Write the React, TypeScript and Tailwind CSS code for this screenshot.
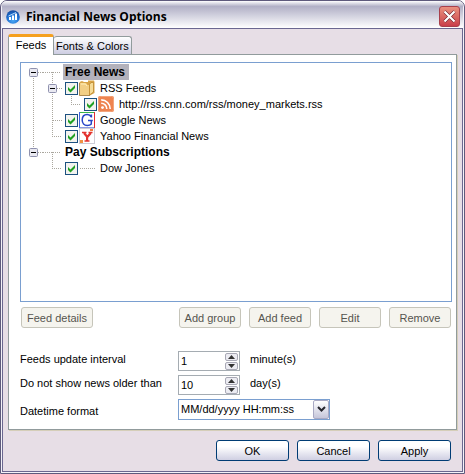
import { useState } from "react";
import type { ReactNode } from "react";

type Guide = "blank" | "bar" | "tee" | "elbow" | "branch" | "first" | "middle" | "last";

const guidePaths: Record<Guide, string> = {
  blank: "",
  bar: "M9.5 0V16",
  tee: "M9.5 0V16M10 8.5H19",
  elbow: "M9.5 0V8M9 8.5H19",
  branch: "M0 8.5H17M9.5 8V16",
  first: "M9.5 8V16M10 8.5H19",
  middle: "M9.5 0V16M10 8.5H19",
  last: "M9.5 0V8M10 8.5H19",
};

const hasToggle = (guide: Guide) => guide === "first" || guide === "middle" || guide === "last";

function GuideCell({ guide }: { guide: Guide }) {
  return (
    <svg className="h-4 w-[19px] shrink-0" viewBox="0 0 19 16" aria-hidden="true">
      <path d={guidePaths[guide]} fill="none" stroke="#aaa79e" strokeDasharray="1 1" />
      {hasToggle(guide) && (
        <>
          <rect x="5.5" y="4.5" width="8" height="8" rx="1" fill="#e9e9f1" stroke="#8f91ae" />
          <path d="M7 8.5H12" stroke="#000" />
        </>
      )}
    </svg>
  );
}

function FolderIcon() {
  return (
    <svg className="size-4" viewBox="0 0 16 16" aria-hidden="true">
      <path d="M0.5 2L3 1L5 2H9V0.5H15L15.5 2V13L11 15.5H0.5Z" fill="#d9a548" />
      <path d="M1 3H7L8.5 5H10V15H1Z" fill="#f2cf85" />
      <path d="M2 4H6.5L8 6" fill="none" stroke="#fff0b9" />
      <path d="M10.5 4.5L12 2.5H14.5V12L10.5 15Z" fill="#f6dc98" stroke="#b98225" strokeWidth=".7" />
      <path d="M0.5 3V15.5H11" fill="none" stroke="#9d783c" strokeWidth=".8" />
    </svg>
  );
}

function FeedIcon() {
  return (
    <svg className="size-4" viewBox="0 0 16 16" aria-hidden="true">
      <rect width="16" height="16" rx="2" fill="#ee8450" />
      <rect x=".5" y=".5" width="15" height="15" rx="2" fill="none" stroke="#f3a57d" />
      <circle cx="4.5" cy="11.6" r="1.4" fill="#fff" />
      <path d="M3.2 7.3a5.6 5.6 0 0 1 5.6 5.6M3.2 3.9a9 9 0 0 1 9 9" fill="none" stroke="#fff" strokeWidth="1.6" />
    </svg>
  );
}

function GoogleIcon() {
  return (
    <svg className="size-4" viewBox="0 0 16 16" aria-hidden="true">
      <rect width="16" height="16" fill="#fff" />
      <path d="M0 .5H15" stroke="#39b54a" />
      <path d="M15.5 0V16" stroke="#e52c35" />
      <path d="M.5 0V16" stroke="#4262dc" />
      <path d="M1 15.5H15" stroke="#8b9be0" />
      <path d="M12.4 5.5V2.5M12.2 4.8C11.4 3.2 10 2.4 8.2 2.4C5 2.4 3.2 4.8 3.2 8C3.2 11.2 5.2 13.5 8.2 13.5C10 13.5 11.5 13 12.3 12V8.6M9 8.5H13.8" fill="none" stroke="#2746c8" strokeWidth="1.5" />
    </svg>
  );
}

function YahooIcon() {
  return (
    <svg className="size-4" viewBox="0 0 16 16" aria-hidden="true">
      <rect x=".5" y=".5" width="15" height="15" fill="#fff" stroke="#cdcdd6" />
      <path d="M3 4.5H7.5M9.5 4.5H13.5M5.5 13H10.5" stroke="#e33431" strokeWidth="1.4" />
      <path d="M5 5L8.3 9L11.8 5M8.1 8.5V13" fill="none" stroke="#e33431" strokeWidth="2.2" />
      <rect x="11" y="1" width="3" height="2" fill="#ef7b43" />
      <rect x="1" y="12" width="3" height="3" fill="#f09344" />
    </svg>
  );
}

function DottedGap() {
  return (
    <svg className="size-4" viewBox="0 0 16 16" aria-hidden="true">
      <path d="M1 8.5H16" stroke="#aaa79e" strokeDasharray="1 1" />
    </svg>
  );
}

function AppIcon() {
  return (
    <svg className="size-[14px] shrink-0" viewBox="0 0 14 14" aria-hidden="true">
      <defs>
        <radialGradient id="globe" cx=".5" cy=".75" r=".75">
          <stop offset="0" stopColor="#4aa8f5" />
          <stop offset=".6" stopColor="#1f6fd0" />
          <stop offset="1" stopColor="#164a9c" />
        </radialGradient>
      </defs>
      <circle cx="7" cy="7" r="6.8" fill="url(#globe)" />
      <path d="M3 7H5V10H3ZM6 5.5H8V10H6ZM9 3.5H11V10H9Z" fill="#fff" />
      <path d="M2.5 6L10 2.5" stroke="#b8dcfa" />
    </svg>
  );
}

type TreeRow = {
  label: string;
  guides: Guide[];
  group?: boolean;
  icon?: ReactNode;
};

const rows: TreeRow[] = [
  { label: "Free News", guides: ["first", "branch"], group: true },
  { label: "RSS Feeds", guides: ["bar", "middle"], icon: <FolderIcon /> },
  { label: "http://rss.cnn.com/rss/money_markets.rss", guides: ["bar", "bar", "elbow"], icon: <FeedIcon /> },
  { label: "Google News", guides: ["bar", "tee"], icon: <GoogleIcon /> },
  { label: "Yahoo Financial News", guides: ["bar", "elbow"], icon: <YahooIcon /> },
  { label: "Pay Subscriptions", guides: ["last", "branch"], group: true },
  { label: "Dow Jones", guides: ["blank", "elbow"], icon: <DottedGap /> },
];

function FeedRow({ row, selected, onSelect }: { row: TreeRow; selected: boolean; onSelect: () => void }) {
  return (
    <li className="flex h-4 items-center" onClick={onSelect}>
      {row.guides.map((guide, i) => (
        <GuideCell key={i} guide={guide} />
      ))}
      {row.group ? (
        <span className={`ml-px h-4 pr-1 pl-0.5 text-[12px] leading-4 font-bold ${selected ? "bg-[#b3b2bc]" : ""}`}>
          {row.label}
        </span>
      ) : (
        <label className="flex items-center pl-[3px]">
          <span className="relative mr-px size-[13px]">
            <input
              type="checkbox"
              defaultChecked
              className="peer block size-[13px] appearance-none border border-[#1c5180] bg-[#f3f3ef]"
            />
            <svg className="pointer-events-none absolute inset-0 hidden peer-checked:block" viewBox="0 0 13 13" aria-hidden="true">
              <path d="M3 5V8L5.5 10.5L10 6V3L5.5 7.5Z" fill="#21a121" />
            </svg>
          </span>
          {row.icon}
          <span className="ml-[5px] leading-4 whitespace-nowrap">{row.label}</span>
        </label>
      )}
    </li>
  );
}

function SpinnerRow({ id, label, unit, initial }: { id: string; label: string; unit: string; initial: number }) {
  const [value, setValue] = useState(initial);
  const arrow = "flex h-2 w-[13px] items-center justify-center rounded-xs border border-[#a9a9b6] bg-[#ececf2]";
  return (
    <div className="flex h-6 items-center">
      <label htmlFor={id} className="w-[158px] pb-1">
        {label}
      </label>
      <div className="flex h-5 w-[62px] items-center border border-[#a5acb2] bg-white pr-px">
        <input
          id={id}
          type="text"
          value={value}
          onChange={(e) => setValue(Number(e.target.value) || 0)}
          className="w-full min-w-0 px-0.5 outline-none"
        />
        <div className="flex flex-col gap-px">
          <button type="button" aria-label="Increase" className={arrow} onClick={() => setValue(value + 1)}>
            <svg className="h-1 w-[7px]" viewBox="0 0 7 4" aria-hidden="true">
              <path d="M0 4L3.5 0L7 4Z" fill="#333" />
            </svg>
          </button>
          <button type="button" aria-label="Decrease" className={arrow} onClick={() => setValue(value - 1)}>
            <svg className="h-1 w-[7px]" viewBox="0 0 7 4" aria-hidden="true">
              <path d="M0 0L3.5 4L7 0Z" fill="#333" />
            </svg>
          </button>
        </div>
      </div>
      <span className="pb-1 pl-[10px]">{unit}</span>
    </div>
  );
}

function ListButton({ children, wide }: { children: ReactNode; wide?: boolean }) {
  return (
    <button
      type="button"
      disabled
      className={`h-[21px] rounded-[3px] border border-[#c6c5ba] bg-[#f5f4ee] text-[#55554f] ${wide ? "w-[72px]" : "w-[62px]"}`}
    >
      {children}
    </button>
  );
}

function DialogButton({ children }: { children: ReactNode }) {
  return (
    <button
      type="button"
      className="h-[21px] w-[73px] rounded-[3px] border border-[#003c74] bg-linear-to-b from-white from-30% to-[#cfcfe2]"
    >
      {children}
    </button>
  );
}

export default function App() {
  const [selected, setSelected] = useState("Free News");

  return (
    <div className="flex min-h-screen flex-col overflow-hidden rounded-t-[7px] border border-[#5e5a7c] bg-[#f4f2f8] px-px pb-px font-['Liberation_Sans',Arial,sans-serif] text-[11px] leading-4 text-black">
      <header className="flex h-[27px] shrink-0 items-center justify-between bg-linear-to-b from-white via-[#b1b0c6] via-20% to-white pr-[3px] pl-1">
        <div className="flex items-center gap-[6px] pt-1">
          <AppIcon />
          <h1 className="font-['Open_Sans','Trebuchet_MS',sans-serif] text-[12px] leading-4 font-bold">
            Financial News Options
          </h1>
        </div>
        <button
          type="button"
          aria-label="Close"
          className="mt-1 flex size-[21px] items-center justify-center rounded-[3px] border border-[#a8404c] bg-linear-to-b from-[#e9907f] to-[#c93d4a]"
        >
          <svg className="size-[13px]" viewBox="0 0 13 13" aria-hidden="true">
            <path d="M1.5 1.5L11.5 11.5M11.5 1.5L1.5 11.5" stroke="#6f2430" strokeWidth="3.2" />
            <path d="M1.5 1.5L11.5 11.5M11.5 1.5L1.5 11.5" stroke="#fff" strokeWidth="2.2" />
          </svg>
        </button>
      </header>

      <main className="flex grow flex-col border border-[#6b6790] bg-[#e7dee6] px-[5px] pt-[5px]">
        <div role="tablist" className="flex items-end">
          <button
            type="button"
            role="tab"
            aria-selected="true"
            className="z-10 -mb-px h-[21px] w-[46px] rounded-t-[3px] border-x border-t-3 border-x-[#919b9c] border-t-[#f5a01e] bg-white pb-1"
          >
            Feeds
          </button>
          <button
            type="button"
            role="tab"
            aria-selected="false"
            className="h-[18px] rounded-t-[3px] border border-b-0 border-l-0 border-[#919b9c] bg-linear-to-b from-white to-[#cdcde2] px-0.5"
          >
            Fonts &amp; Colors
          </button>
        </div>

        <section className="flex grow flex-col border border-[#919b9c] bg-white pt-[7px] pr-1 pb-2 pl-[11px] shadow-[1px_1px_0_#d5ceb9]">
          <ul className="grow border border-[#7a9fd0] bg-white px-[3px] py-px">
            {rows.map((row) => (
              <FeedRow
                key={row.label}
                row={row}
                selected={selected === row.label}
                onSelect={() => setSelected(row.label)}
              />
            ))}
          </ul>

          <div className="mt-[5px] flex justify-between px-px">
            <ListButton wide>Feed details</ListButton>
            <div className="flex gap-2">
              <ListButton>Add group</ListButton>
              <ListButton>Add feed</ListButton>
              <ListButton>Edit</ListButton>
              <ListButton>Remove</ListButton>
            </div>
          </div>

          <div className="mt-[21px]">
            <SpinnerRow id="interval" label="Feeds update interval" unit="minute(s)" initial={1} />
            <SpinnerRow id="age" label="Do not show news older than" unit="day(s)" initial={10} />
            <div className="flex h-6 items-center">
              <label htmlFor="format" className="w-[158px] pt-1">
                Datetime format
              </label>
              <div className="relative">
                <select
                  id="format"
                  className="block h-[21px] w-[152px] appearance-none border border-[#7a9fd0] bg-white pl-0.5 outline-none"
                >
                  <option>MM/dd/yyyy HH:mm:ss</option>
                </select>
                <span className="pointer-events-none absolute inset-y-px right-px flex w-4 items-center justify-center rounded-xs border border-[#a9a9c4] bg-linear-to-b from-white to-[#c6c6da]">
                  <svg className="h-[6px] w-[9px]" viewBox="0 0 9 6" aria-hidden="true">
                    <path d="M1 1L4.5 4.5L8 1" fill="none" stroke="#26262e" strokeWidth="2" />
                  </svg>
                </span>
              </div>
            </div>
          </div>
        </section>

        <footer className="flex justify-end gap-2 pt-[10px] pr-[6px] pb-[10px]">
          <DialogButton>OK</DialogButton>
          <DialogButton>Cancel</DialogButton>
          <DialogButton>Apply</DialogButton>
        </footer>
      </main>
    </div>
  );
}
